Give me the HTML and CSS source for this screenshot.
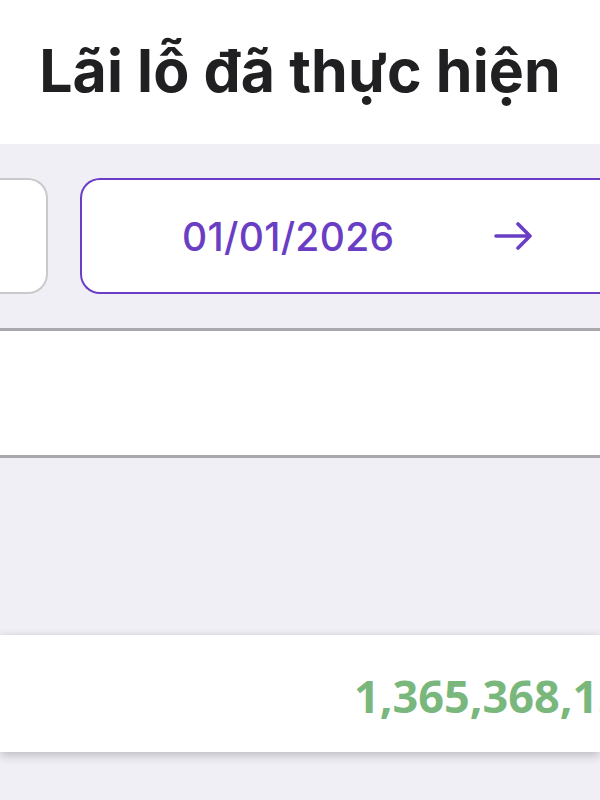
FILE: index.html
```html
<!DOCTYPE html>
<html lang="vi">
<head>
<meta charset="utf-8">
<link rel="stylesheet" href="styles.css">
</head>
<body>
<div class="page">
  <header class="header">
    <h1 class="title">Lãi lỗ đã thực hiện</h1>
  </header>
  <section class="band band-dates">
    <div class="date-box date-prev"></div>
    <div class="date-box date-current">
      <span class="date-text">01/01/2026</span>
      <svg class="arrow" width="44" height="36" viewBox="0 0 44 36" aria-hidden="true">
        <path d="M4 18 H38 M26 6 L38 18 L26 30" fill="none" stroke="#6a3ec4" stroke-width="3.6" stroke-linecap="round" stroke-linejoin="round"/>
      </svg>
    </div>
  </section>
  <div class="divider"></div>
  <section class="blank"></section>
  <div class="divider"></div>
  <section class="band band-gap"></section>
  <section class="card">
    <span class="amount">1,365,368,120</span>
  </section>
  <section class="band band-bottom"></section>
</div>
</body>
</html>
```

FILE: styles.css
```css
* { box-sizing: border-box; }
html, body { margin: 0; padding: 0; }
body {
  width: 600px;
  height: 800px;
  overflow: hidden;
  background: #f0eff5;
  font-family: Inter, "Noto Sans", sans-serif;
}
.page {
  width: 600px;
  height: 800px;
  overflow: hidden;
  display: flex;
  flex-direction: column;
}
.header {
  height: 144px;
  background: #ffffff;
  display: flex;
  align-items: center;
  justify-content: center;
}
.title {
  margin: 0;
  font-size: 59px;
  font-weight: 700;
  color: #202022;
  letter-spacing: 0.1px;
  line-height: 1;
  padding-bottom: 4px;
}
.band { background: #f0eff5; }
.band-dates {
  height: 184px;
  display: grid;
  grid-template-columns: 48px 1fr;
  column-gap: 32px;
  align-items: center;
}
.date-box {
  height: 116px;
  background: #ffffff;
}
.date-prev {
  border: 2.5px solid #c9c9cd;
  border-left: none;
  border-radius: 0 20px 20px 0;
}
.date-current {
  border: 2.5px solid #6a3ec4;
  border-right: none;
  border-radius: 20px 0 0 20px;
  display: flex;
  align-items: center;
  padding-left: 100px;
}
.date-text {
  font-size: 39px;
  font-weight: 500;
  color: #6a3ec4;
  letter-spacing: 0.3px;
}
.arrow {
  margin-left: 98px;
}
.divider {
  height: 3px;
  background: #a9a9ad;
}
.blank {
  height: 124px;
  background: #ffffff;
}
.band-gap { height: 177px; }
.card {
  height: 117px;
  background: #ffffff;
  box-shadow: 0 4px 10px rgba(0, 0, 0, 0.18), 0 0 8px rgba(0, 0, 0, 0.06);
  position: relative;
  z-index: 1;
  display: flex;
  align-items: center;
  padding-left: 354px;
  white-space: nowrap;
  overflow: hidden;
}
.amount {
  font-family: "Open Sans", "Noto Sans", sans-serif;
  font-size: 45px;
  font-weight: 700;
  color: #79b77c;
  padding-top: 4px;
}
.band-bottom { flex: 1; }
```
